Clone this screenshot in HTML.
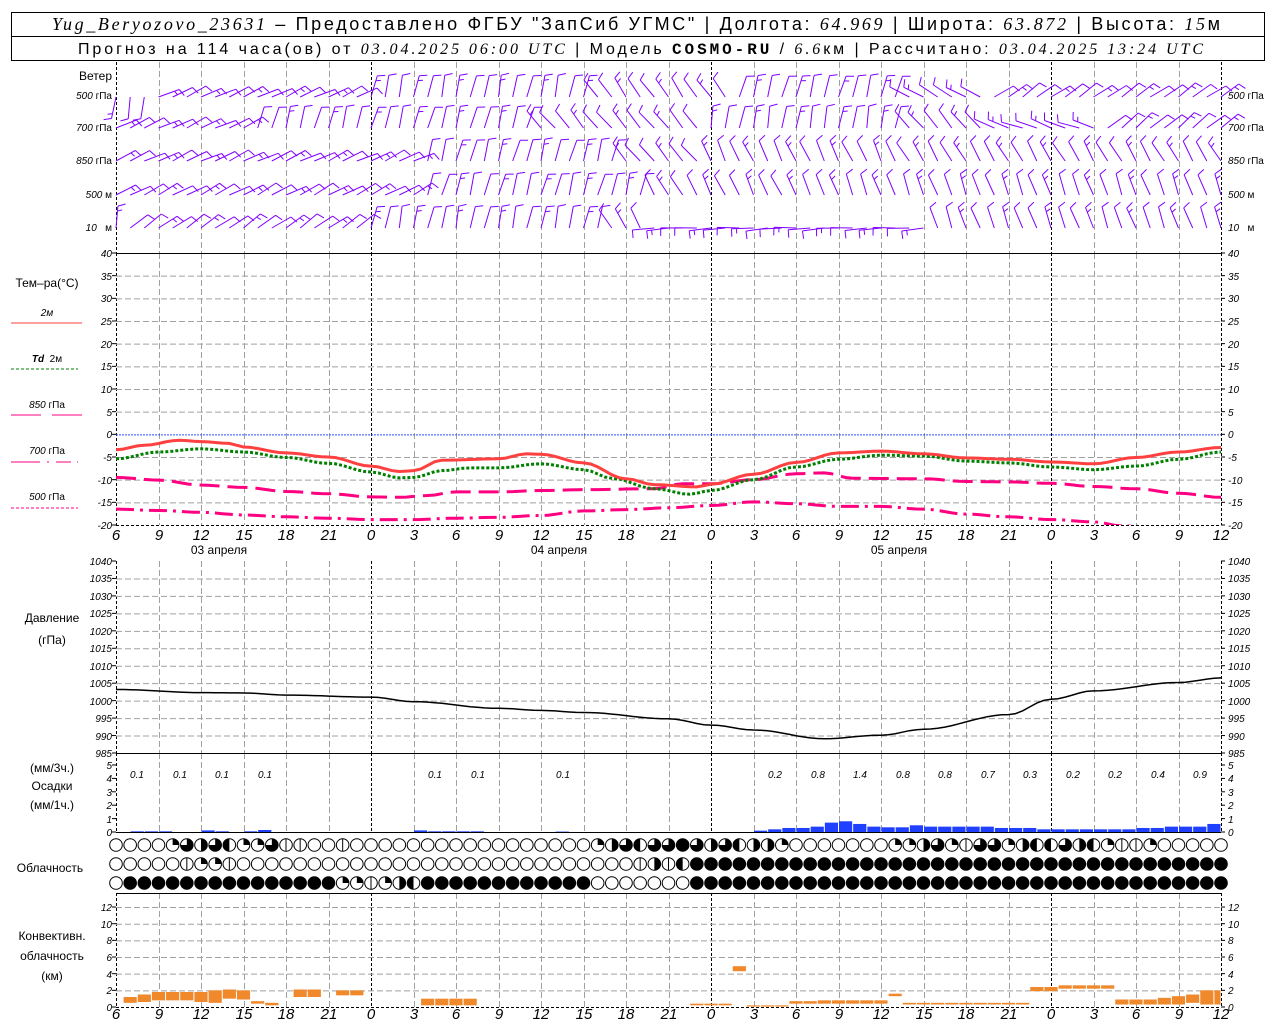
<!DOCTYPE html>
<html><head><meta charset="utf-8"><style>
html,body{margin:0;padding:0;background:#fff;}
svg{display:block;}
.t{font-family:"Liberation Sans",sans-serif;font-size:12px;fill:#000;}
.ax{font-family:"Liberation Sans",sans-serif;font-size:10px;font-style:italic;fill:#000;}
.tm{font-family:"Liberation Sans",sans-serif;font-size:15px;font-style:italic;fill:#000;}
.hd{font-family:"Liberation Sans",sans-serif;fill:#000;}
.it{font-style:italic;font-family:"Liberation Serif",serif;}
</style></head><body>
<svg id="s" xmlns="http://www.w3.org/2000/svg" width="1280" height="1024" viewBox="0 0 1280 1024">
<rect x="0" y="0" width="1280" height="1024" fill="#fff"/>
<rect x="11.5" y="12.5" width="1253" height="48" fill="none" stroke="#000" stroke-width="1"/>
<line x1="11" y1="36.5" x2="1265" y2="36.5" stroke="#000"/>
<text class="hd" x="52" y="30" font-size="18" textLength="1168" lengthAdjust="spacing"><tspan class="it">Yug_Beryozovo_23631</tspan> – Предоставлено ФГБУ "ЗапСиб УГМС" | Долгота: <tspan class="it">64.969</tspan> | Широта: <tspan class="it">63.872</tspan> | Высота: <tspan class="it">15</tspan>м</text>
<text class="hd" x="78" y="54" font-size="16" textLength="1125" lengthAdjust="spacing">Прогноз на 114 часа(ов) от <tspan class="it">03.04.2025 06:00 UTC</tspan> | Модель <tspan font-family="Liberation Mono" font-weight="bold">COSMO-RU</tspan> / <tspan class="it">6.6</tspan>км | Рассчитано: <tspan class="it">03.04.2025 13:24 UTC</tspan></text>
<g id="grid"></g>
<g id="data"></g>
<text class="t" x="112" y="80" text-anchor="end">Ветер</text>
<text class="ax" x="112" y="99" text-anchor="end">500 <tspan font-style="normal">гПа</tspan></text>
<text class="ax" x="112" y="131" text-anchor="end">700 <tspan font-style="normal">гПа</tspan></text>
<text class="ax" x="112" y="164" text-anchor="end">850 <tspan font-style="normal">гПа</tspan></text>
<text class="ax" x="112" y="198" text-anchor="end">500 <tspan font-style="normal">м</tspan></text>
<text class="ax" x="112" y="231" text-anchor="end">10 &#160; <tspan font-style="normal">м</tspan></text>
<text class="ax" x="1228" y="99">500 <tspan font-style="normal">гПа</tspan></text>
<text class="ax" x="1228" y="131">700 <tspan font-style="normal">гПа</tspan></text>
<text class="ax" x="1228" y="164">850 <tspan font-style="normal">гПа</tspan></text>
<text class="ax" x="1228" y="198">500 <tspan font-style="normal">м</tspan></text>
<text class="ax" x="1228" y="231">10 &#160; <tspan font-style="normal">м</tspan></text>

<text class="t" x="47" y="287" text-anchor="middle">Тем–ра(°С)</text>
<text class="ax" x="47" y="316" text-anchor="middle" font-style="normal">2м</text>
<line x1="11" y1="323" x2="82" y2="323" stroke="#ff4040" stroke-width="1"/>
<text class="ax" x="47" y="362" text-anchor="middle"><tspan font-weight="bold">Td</tspan> &#160;<tspan font-style="normal">2м</tspan></text>
<line x1="11" y1="369" x2="78" y2="369" stroke="#008000" stroke-dasharray="3,2"/>
<text class="ax" x="47" y="408" text-anchor="middle">850 <tspan font-style="normal">гПа</tspan></text>
<line x1="11" y1="415" x2="41" y2="415" stroke="#ff0080"/><line x1="52" y1="415" x2="82" y2="415" stroke="#ff0080"/>
<text class="ax" x="47" y="454" text-anchor="middle">700 <tspan font-style="normal">гПа</tspan></text>
<line x1="11" y1="462" x2="40" y2="462" stroke="#ff0080"/><line x1="47" y1="462" x2="49" y2="462" stroke="#ff0080"/><line x1="56" y1="462" x2="71" y2="462" stroke="#ff0080"/><line x1="77" y1="462" x2="78" y2="462" stroke="#ff0080"/>
<text class="ax" x="47" y="500" text-anchor="middle">500 <tspan font-style="normal">гПа</tspan></text>
<line x1="11" y1="508" x2="78" y2="508" stroke="#ff0080" stroke-dasharray="3,2"/>

<text class="t" x="52" y="622" text-anchor="middle">Давление</text>
<text class="t" x="52" y="644" text-anchor="middle">(гПа)</text>
<text class="t" x="52" y="772" text-anchor="middle">(мм/3ч.)</text>
<text class="t" x="52" y="790" text-anchor="middle">Осадки</text>
<text class="t" x="52" y="809" text-anchor="middle">(мм/1ч.)</text>
<text class="t" x="50" y="872" text-anchor="middle">Облачность</text>
<text class="t" x="52" y="940" text-anchor="middle">Конвективн.</text>
<text class="t" x="52" y="960" text-anchor="middle">облачность</text>
<text class="t" x="52" y="980" text-anchor="middle">(км)</text>

<g class="ax">
<text x="112" y="257" text-anchor="end">40</text><text x="112" y="280" text-anchor="end">35</text><text x="112" y="302" text-anchor="end">30</text><text x="112" y="325" text-anchor="end">25</text><text x="112" y="348" text-anchor="end">20</text><text x="112" y="370" text-anchor="end">15</text><text x="112" y="393" text-anchor="end">10</text><text x="112" y="416" text-anchor="end">5</text><text x="112" y="438" text-anchor="end">0</text><text x="112" y="461" text-anchor="end">-5</text><text x="112" y="484" text-anchor="end">-10</text><text x="112" y="506" text-anchor="end">-15</text><text x="112" y="529" text-anchor="end">-20</text>
<text x="1228" y="257">40</text><text x="1228" y="280">35</text><text x="1228" y="302">30</text><text x="1228" y="325">25</text><text x="1228" y="348">20</text><text x="1228" y="370">15</text><text x="1228" y="393">10</text><text x="1228" y="416">5</text><text x="1228" y="438">0</text><text x="1228" y="461">-5</text><text x="1228" y="484">-10</text><text x="1228" y="506">-15</text><text x="1228" y="529">-20</text>
<text x="112" y="565" text-anchor="end">1040</text><text x="112" y="582" text-anchor="end">1035</text><text x="112" y="600" text-anchor="end">1030</text><text x="112" y="617" text-anchor="end">1025</text><text x="112" y="635" text-anchor="end">1020</text><text x="112" y="652" text-anchor="end">1015</text><text x="112" y="670" text-anchor="end">1010</text><text x="112" y="687" text-anchor="end">1005</text><text x="112" y="705" text-anchor="end">1000</text><text x="112" y="722" text-anchor="end">995</text><text x="112" y="740" text-anchor="end">990</text><text x="112" y="757" text-anchor="end">985</text>
<text x="1228" y="565">1040</text><text x="1228" y="582">1035</text><text x="1228" y="600">1030</text><text x="1228" y="617">1025</text><text x="1228" y="635">1020</text><text x="1228" y="652">1015</text><text x="1228" y="670">1010</text><text x="1228" y="687">1005</text><text x="1228" y="705">1000</text><text x="1228" y="722">995</text><text x="1228" y="740">990</text><text x="1228" y="757">985</text>
<text x="112" y="769" text-anchor="end">5</text><text x="112" y="782" text-anchor="end">4</text><text x="112" y="796" text-anchor="end">3</text><text x="112" y="809" text-anchor="end">2</text><text x="112" y="823" text-anchor="end">1</text><text x="112" y="836" text-anchor="end">0</text>
<text x="1228" y="769">5</text><text x="1228" y="782">4</text><text x="1228" y="796">3</text><text x="1228" y="809">2</text><text x="1228" y="823">1</text><text x="1228" y="836">0</text>
<text x="112" y="911" text-anchor="end">12</text><text x="112" y="928" text-anchor="end">10</text><text x="112" y="944" text-anchor="end">8</text><text x="112" y="961" text-anchor="end">6</text><text x="112" y="978" text-anchor="end">4</text><text x="112" y="994" text-anchor="end">2</text><text x="112" y="1011" text-anchor="end">0</text>
<text x="1228" y="911">12</text><text x="1228" y="928">10</text><text x="1228" y="944">8</text><text x="1228" y="961">6</text><text x="1228" y="978">4</text><text x="1228" y="994">2</text><text x="1228" y="1011">0</text>
</g>
<g class="tm" text-anchor="middle">
<text x="116" y="540">6</text><text x="159" y="540">9</text><text x="201" y="540">12</text><text x="244" y="540">15</text><text x="286" y="540">18</text><text x="329" y="540">21</text><text x="371" y="540">0</text><text x="414" y="540">3</text><text x="456" y="540">6</text><text x="499" y="540">9</text><text x="541" y="540">12</text><text x="584" y="540">15</text><text x="626" y="540">18</text><text x="669" y="540">21</text><text x="711" y="540">0</text><text x="754" y="540">3</text><text x="796" y="540">6</text><text x="839" y="540">9</text><text x="881" y="540">12</text><text x="924" y="540">15</text><text x="966" y="540">18</text><text x="1009" y="540">21</text><text x="1051" y="540">0</text><text x="1094" y="540">3</text><text x="1136" y="540">6</text><text x="1179" y="540">9</text><text x="1221" y="540">12</text>
<text x="116" y="1019">6</text><text x="159" y="1019">9</text><text x="201" y="1019">12</text><text x="244" y="1019">15</text><text x="286" y="1019">18</text><text x="329" y="1019">21</text><text x="371" y="1019">0</text><text x="414" y="1019">3</text><text x="456" y="1019">6</text><text x="499" y="1019">9</text><text x="541" y="1019">12</text><text x="584" y="1019">15</text><text x="626" y="1019">18</text><text x="669" y="1019">21</text><text x="711" y="1019">0</text><text x="754" y="1019">3</text><text x="796" y="1019">6</text><text x="839" y="1019">9</text><text x="881" y="1019">12</text><text x="924" y="1019">15</text><text x="966" y="1019">18</text><text x="1009" y="1019">21</text><text x="1051" y="1019">0</text><text x="1094" y="1019">3</text><text x="1136" y="1019">6</text><text x="1179" y="1019">9</text><text x="1221" y="1019">12</text>
</g>
<g class="t" text-anchor="middle">
<text x="219" y="554">03 апреля</text><text x="559" y="554">04 апреля</text><text x="899" y="554">05 апреля</text>
</g>
<g class="ax" font-size="12" text-anchor="middle">
<text x="137" y="778">0.1</text><text x="180" y="778">0.1</text><text x="222" y="778">0.1</text><text x="265" y="778">0.1</text>
<text x="435" y="778">0.1</text><text x="478" y="778">0.1</text><text x="563" y="778">0.1</text>
<text x="775" y="778">0.2</text><text x="818" y="778">0.8</text><text x="860" y="778">1.4</text><text x="903" y="778">0.8</text><text x="945" y="778">0.8</text><text x="988" y="778">0.7</text><text x="1030" y="778">0.3</text><text x="1073" y="778">0.2</text><text x="1115" y="778">0.2</text><text x="1158" y="778">0.4</text><text x="1200" y="778">0.9</text>
</g>
</svg>
<script>
(function(){
var NS="http://www.w3.org/2000/svg";
var G=document.getElementById('grid'),D=document.getElementById('data');
function el(p,n,a){var e=document.createElementNS(NS,n);for(var k in a)e.setAttribute(k,a[k]);p.appendChild(e);return e;}
var L=116,R=1221,S=(R-L)/78;
function X(h){return L+h*S;}
var panels=[[62,253],[253,525],[561,753],[753,832],[893,1007]];
for(var i=0;i<=26;i++){var x=Math.round(X(i*3))+0.5;var day=(i==0||i==6||i==14||i==22||i==26);
 panels.forEach(function(p){el(G,'line',{x1:x,y1:p[0],x2:x,y2:p[1],stroke:day?'#000':'#a0a0a0','stroke-dasharray':day?'3,2':'6,3','stroke-width':1});});}
function hgrid(y){el(G,'line',{x1:L,y1:y,x2:R,y2:y,stroke:'#a0a0a0','stroke-dasharray':'6,3'});}
function tick(y){el(G,'line',{x1:L-4,y1:y,x2:L,y2:y,stroke:'#000'});el(G,'line',{x1:R,y1:y,x2:R+4,y2:y,stroke:'#000'});}
function TY(t){return 253+(40-t)*(272/60);}
for(var t=35;t>=-15;t-=5){if(t!=0)hgrid(TY(t)+.5);}
for(var t=40;t>=-20;t-=5)tick(TY(t));
el(G,'line',{x1:L,y1:TY(0)+.5,x2:R,y2:TY(0)+.5,stroke:'#3050ff','stroke-dasharray':'2,1'});
function PY(p){return 561+(1040-p)*(192/55);}
for(var p=1035;p>=990;p-=5)hgrid(PY(p)+.5);
for(var p=1040;p>=985;p-=5)tick(PY(p));
function RY(v){return 832-v*13.4;}
for(var v=0;v<=5;v++)tick(RY(v));
function CY(v){return 1007-v*8.33;}
for(var v=2;v<=12;v+=2)hgrid(CY(v)+.5);
for(var v=0;v<=12;v+=2)tick(CY(v));
[253.5,753.5,832.5,893.5].forEach(function(y){el(G,'line',{x1:L,y1:y,x2:R,y2:y,stroke:'#000'});});
el(G,'line',{x1:L,y1:525.5,x2:R,y2:525.5,stroke:'#000','stroke-dasharray':'3,2'});
el(G,'line',{x1:L,y1:1007.5,x2:R,y2:1007.5,stroke:'#000','stroke-dasharray':'3,2'});
function interp(kp,h){for(var i=0;i<kp.length-1;i++){if(h>=kp[i][0]&&h<=kp[i+1][0]){var a=kp[i],b=kp[i+1],f=(h-a[0])/(b[0]-a[0]);f=(1-Math.cos(f*Math.PI))/2;return a[1]+(b[1]-a[1])*f;}}return kp[kp.length-1][1];}
function curve(kp,fy,attrs){var pts=[];for(var h=0;h<=78;h+=0.5){pts.push(X(h).toFixed(1)+','+fy(interp(kp,h)).toFixed(1));}attrs.points=pts.join(' ');attrs.fill='none';el(D,'polyline',attrs);}
var T2=[[0,-3.4],[2,-2.4],[4.5,-1.3],[6,-1.6],[8,-2.0],[9,-2.8],[12,-4.1],[15,-5],[18,-7.0],[20,-8.2],[21,-8.0],[23,-5.7],[27,-5.4],[29,-4.3],[30,-4.4],[33,-6.3],[36,-9.8],[38,-11.1],[41,-11.6],[42,-11.0],[45,-8.8],[48,-6.2],[51,-4.1],[54,-3.7],[57,-4.3],[60,-5.2],[63,-5.5],[66,-6.1],[69,-6.5],[72,-5.1],[75,-3.9],[78,-2.9]];
var TD=[[0,-5.4],[3,-3.9],[6,-3.2],[9,-3.9],[12,-5.1],[15,-6.4],[18,-8.3],[20,-9.6],[21,-9.5],[23,-8.0],[25,-7.4],[27,-7.4],[30,-6.5],[33,-7.8],[35,-9.7],[38,-12.0],[40.5,-13.2],[42,-12.4],[45,-10],[48,-7.2],[51,-5.5],[54,-4.6],[57,-4.8],[60,-5.9],[63,-6.3],[66,-7.2],[69,-7.8],[72,-7],[75,-5.5],[78,-3.9]];
var P85=[[0,-9.5],[3,-10.1],[6,-11.2],[9,-11.7],[12,-12.6],[15,-13.1],[18,-13.8],[20,-13.9],[22,-13.5],[24,-12.7],[27,-12.7],[30,-12.4],[33,-12.2],[38,-12.0],[40,-10.9],[42,-10.9],[45,-10],[48,-8.7],[50,-8.5],[52,-9.7],[57,-9.8],[60,-10.4],[63,-10.5],[66,-10.8],[69,-11.5],[72,-12],[75,-13],[78,-13.9]];
var P70=[[0,-16.5],[3,-16.8],[6,-17.2],[9,-17.8],[12,-18.2],[15,-18.5],[18,-18.8],[21,-18.8],[24,-18.5],[27,-18.3],[30,-17.9],[33,-16.9],[36,-16.6],[39,-16.2],[42,-15.7],[45,-14.9],[48,-15.3],[51,-15.9],[54,-15.9],[57,-16.5],[60,-17.6],[63,-18.2],[66,-18.8],[69,-19.3],[71,-20.2],[78,-22]];
var cp=el(D,'clipPath',{id:'cl'});el(cp,'rect',{x:L,y:253,width:R-L,height:272});
var g=el(D,'g',{'clip-path':'url(#cl)'});var DD=D;D=g;
curve(P70,TY,{stroke:'#ff0080','stroke-width':3,'stroke-dasharray':'18,6,3,6'});
curve(P85,TY,{stroke:'#ff0080','stroke-width':3,'stroke-dasharray':'20,8'});
curve(TD,TY,{stroke:'#008000','stroke-width':3,'stroke-dasharray':'3,2'});
curve(T2,TY,{stroke:'#ff4040','stroke-width':3});
D=DD;
var PR=[[0,1003.2],[6,1002.3],[9,1002.2],[12,1001.6],[18,1001],[21,999.7],[27,997.8],[30,997.2],[33,996.6],[39,994.8],[42,993],[45,991.6],[50,989.1],[54,990.1],[57,991.8],[63,996],[66,1000.4],[69,1002.8],[75,1005.2],[78,1006.5]];
curve(PR,PY,{stroke:'#000','stroke-width':1.5});
var pb={1:0.05,2:0.05,3:0.05,6:0.12,7:0.05,9:0.05,10:0.15,21:0.12,22:0.05,23:0.05,24:0.05,25:0.05,31:0.03};
var ap=[0.1,0.2,0.3,0.3,0.4,0.7,0.8,0.6,0.4,0.35,0.35,0.5,0.4,0.4,0.4,0.4,0.4,0.3,0.3,0.3,0.2,0.2,0.2,0.2,0.2,0.2,0.2,0.3,0.3,0.4,0.4,0.4,0.6];
for(var i=0;i<ap.length;i++)pb[45+i]=ap[i];
for(var k in pb){var h=+k,v=pb[k];el(D,'rect',{x:X(h)+0.5,y:RY(v),width:S-1,height:832-RY(v),fill:'#2040ff'});}
var cb=[[0.5,1.5,0.5,1.2],[1.5,2.5,0.6,1.5],[2.5,5.5,0.8,1.8],[5.5,6.5,0.6,1.8],[6.5,7.5,0.5,2.0],[7.5,8.5,1.0,2.1],[8.5,9.5,0.9,2.0],[9.5,10.5,0.4,0.7],[10.5,11.5,0.2,0.5],[12.5,13.5,1.2,2.1],[13.5,14.5,1.2,2.1],[15.5,17.5,1.4,2.0],[21.5,25.5,0.2,1.0],[40.5,43.5,0.2,0.4],[43.5,44.5,4.3,4.9],[44.5,47.5,0.05,0.2],[47.5,49.5,0.4,0.7],[49.5,54.5,0.4,0.8],[54.5,55.5,1.3,1.6],[55.5,64.5,0.3,0.5],[64.5,66.5,1.9,2.4],[66.5,70.5,2.2,2.6],[70.5,73.5,0.3,0.9],[73.5,74.5,0.3,1.1],[74.5,75.5,0.3,1.3],[75.5,76.5,0.5,1.5],[76.5,78,0.3,2.0]];
cb.forEach(function(b){for(var h=b[0];h<b[1]-0.01;h+=1){var h2=Math.min(h+1,b[1]);el(D,'rect',{x:X(h)+0.5,y:CY(b[3]),width:X(h2)-X(h)-1,height:CY(b[2])-CY(b[3]),fill:'#f0882c'});}});
function rep(c,n){return new Array(n+1).join(c);}
var rows=[
 "0000qthtlqqtvv00v00000"+rep('0',12)+"qhtlttfthtl"+"hhq0"+rep('0',6)+"qqhtqvttqhllt"+"hlqvvq0"+"0000",
 "00000vqqv"+rep('0',28)+"vhvl"+rep('f',38),
 "0"+rep('f',15)+"qqvqhl"+rep('f',12)+rep('0',7)+rep('f',38)];
var ry=[845,864,883],r=6.3;
rows.forEach(function(s,ri){for(var i=0;i<79;i++){var c=s.charAt(i)||'0',cx=X(i),cy=ry[ri];
 el(D,'circle',{cx:cx,cy:cy,r:r,fill:c=='f'?'#000':'#fff',stroke:'#000','stroke-width':1});
 if(c=='q')el(D,'path',{d:'M'+cx+','+cy+'V'+(cy-r)+'A'+r+','+r+' 0 0 1 '+(cx+r)+','+cy+'Z',fill:'#000'});
 if(c=='h')el(D,'path',{d:'M'+cx+','+(cy-r)+'A'+r+','+r+' 0 0 1 '+cx+','+(cy+r)+'Z',fill:'#000'});
 if(c=='l')el(D,'path',{d:'M'+cx+','+(cy-r)+'A'+r+','+r+' 0 0 0 '+cx+','+(cy+r)+'Z',fill:'#000'});
 if(c=='t')el(D,'path',{d:'M'+cx+','+cy+'V'+(cy-r)+'A'+r+','+r+' 0 1 1 '+(cx-r)+','+cy+'Z',fill:'#000'});
 if(c=='v')el(D,'line',{x1:cx,y1:cy-r,x2:cx,y2:cy+r,stroke:'#000'});
}});
var lv=[[97,[[0,3,-170],[3,18,65],[18,34,12],[34,44,-35],[44,56,15],[56,62,-60],[62,79,55]]],
[128,[[0,10,65],[10,30,15],[30,42,-40],[42,56,10],[56,62,-40],[62,70,-70],[70,79,50]]],
[161,[[0,22,65],[22,36,15],[36,42,-40],[42,56,-25],[56,79,-30]]],
[195,[[0,22,62],[22,38,15],[38,42,-30],[42,50,-25],[50,79,-20]]],
[228,[[1,18,55],[18,35,12],[35,38,-30],[38,58,-93],[58,79,-20]]]];
var wg=el(D,'g',{stroke:'#8000ff','stroke-width':1,fill:'none'});
lv.forEach(function(l){var y0=l[0];for(var h=0;h<=78;h++){var a=0;l[1].forEach(function(s){if(h>=s[0]&&h<s[1])a=s[2];});
 a+=Math.sin(h*1.7+y0)*5;var rad=a*Math.PI/180,len=22;
 var x0=X(h),ex=x0+Math.sin(rad)*len,ey=y0-Math.cos(rad)*len;
 var d='M'+x0.toFixed(1)+','+y0+'L'+ex.toFixed(1)+','+ey.toFixed(1);
 var tr=rad+(Math.abs(a+93)<10?-90:70)*Math.PI/180;
 var nt=(h%3==0)?2:1;
 for(var k=0;k<nt;k++){var bx=x0+Math.sin(rad)*(len-k*5),by=y0-Math.cos(rad)*(len-k*5),tl=k?5:8;
  d+='M'+bx.toFixed(1)+','+by.toFixed(1)+'l'+(Math.sin(tr)*tl).toFixed(1)+','+(-Math.cos(tr)*tl).toFixed(1);}
 el(wg,'path',{d:d});}});
})();
</script>
</body></html>
